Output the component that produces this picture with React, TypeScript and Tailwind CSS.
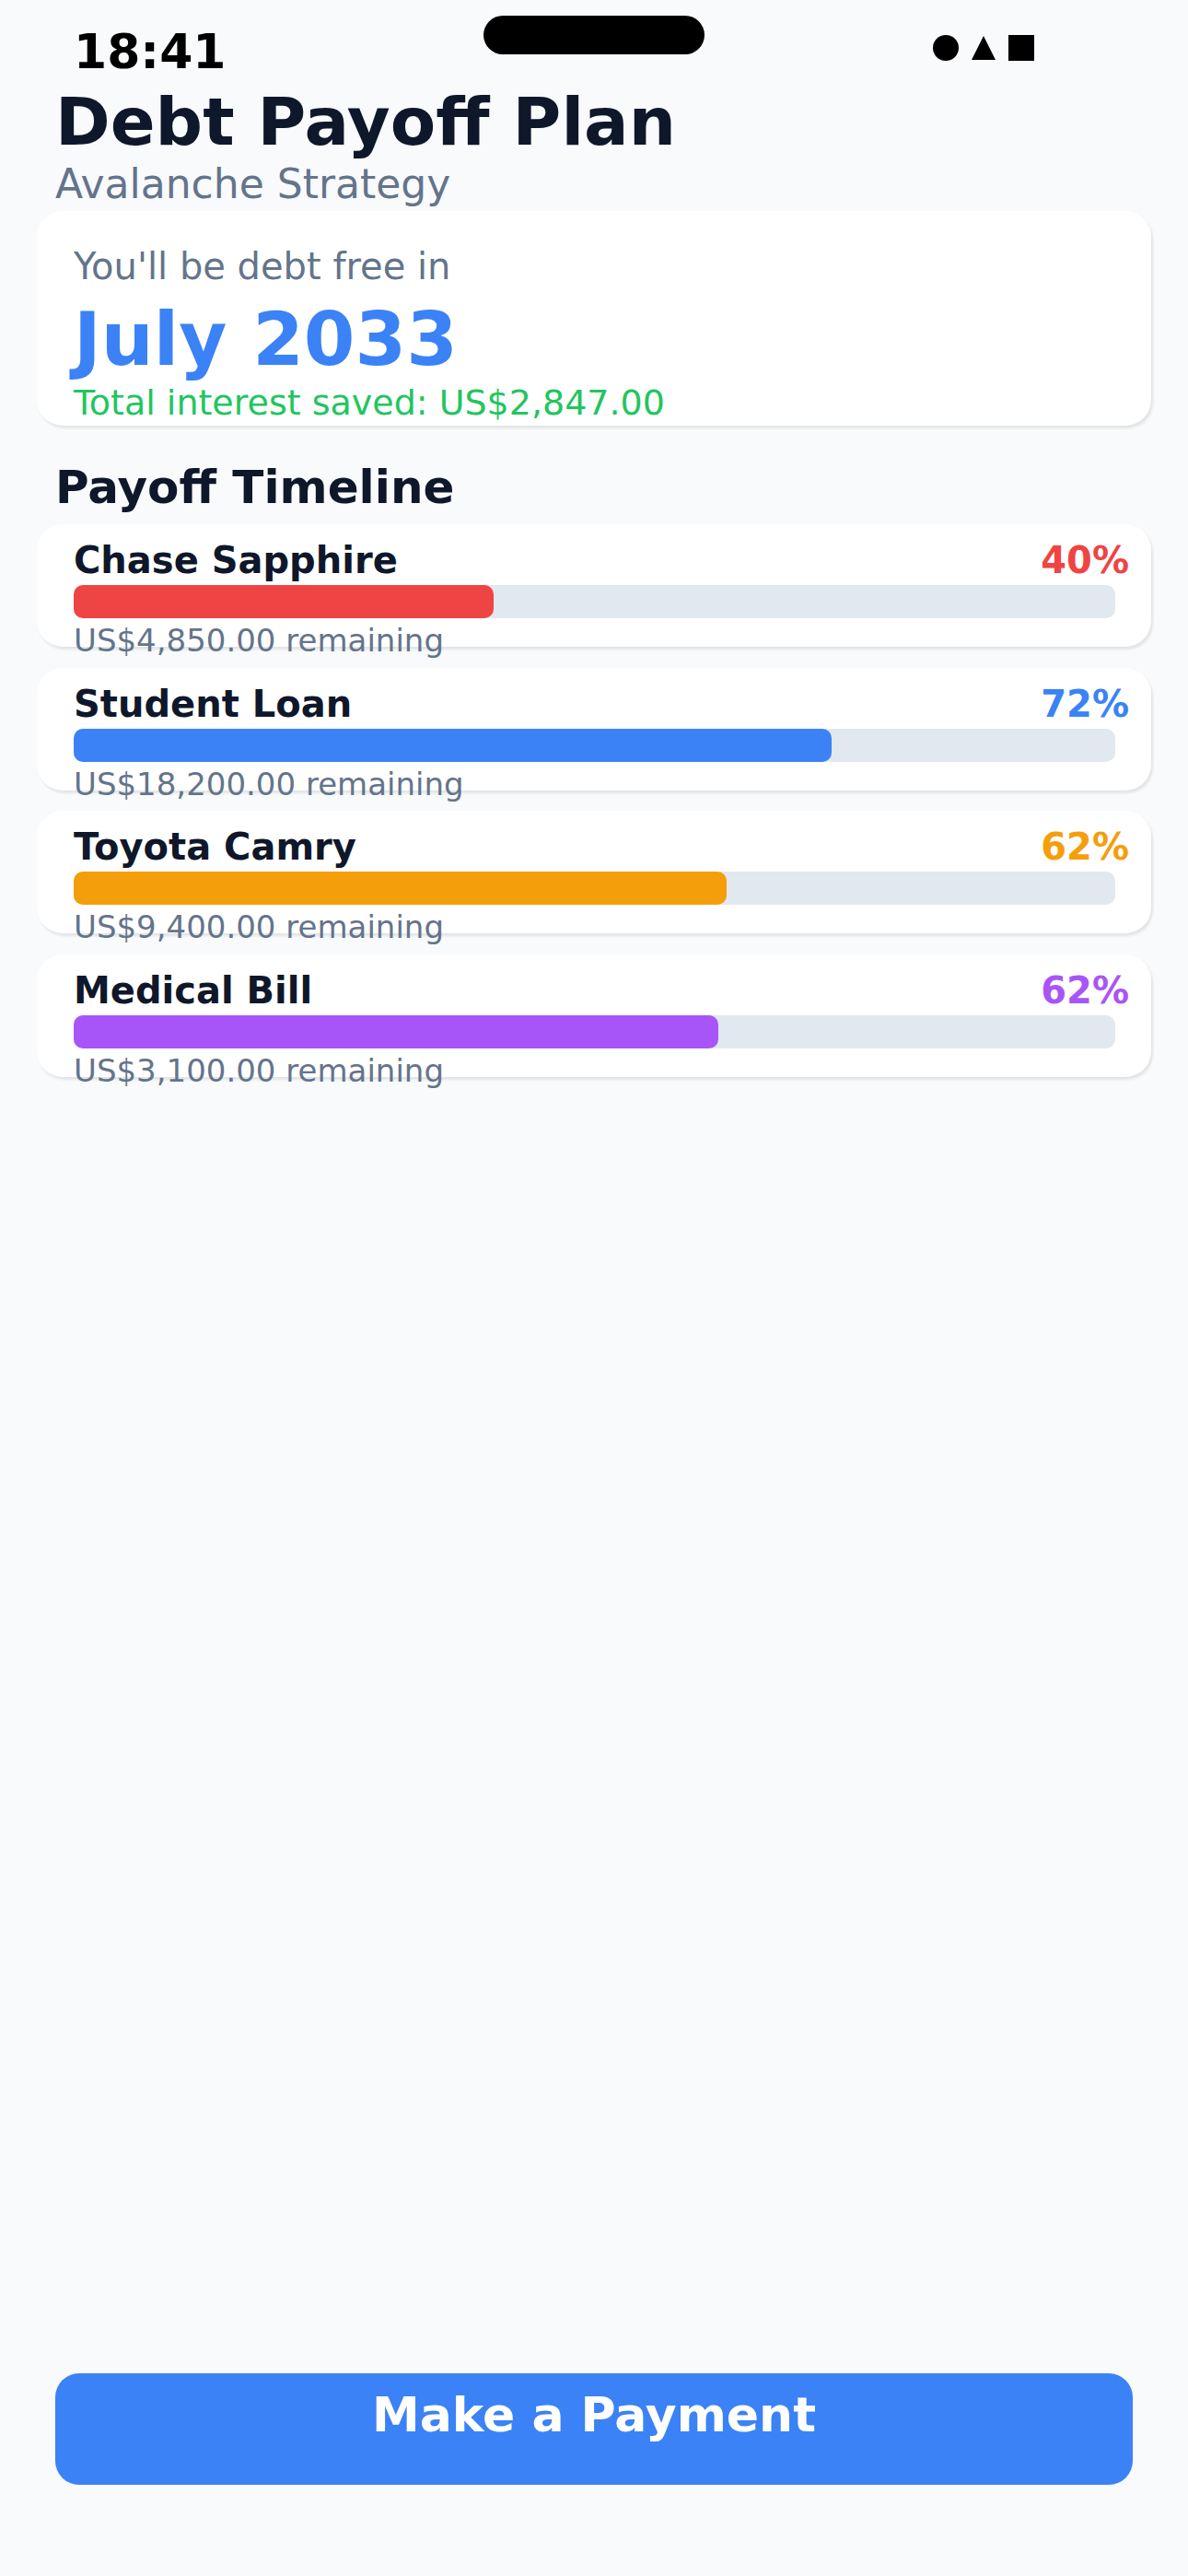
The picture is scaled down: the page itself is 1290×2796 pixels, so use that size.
import React from "react";

type Debt = {
  name: string;
  pct: number;
  fill: number;
  remaining: string;
  text: string;
  bar: string;
};

const debts: Debt[] = [
  { name: "Chase Sapphire", pct: 40, fill: 40.3, remaining: "US$4,850.00", text: "text-[#ef4444]", bar: "bg-[#ef4444]" },
  { name: "Student Loan", pct: 72, fill: 72.8, remaining: "US$18,200.00", text: "text-[#3b82f6]", bar: "bg-[#3b82f6]" },
  { name: "Toyota Camry", pct: 62, fill: 62.7, remaining: "US$9,400.00", text: "text-[#f59e0b]", bar: "bg-[#f59e0b]" },
  { name: "Medical Bill", pct: 62, fill: 61.9, remaining: "US$3,100.00", text: "text-[#a855f7]", bar: "bg-[#a855f7]" },
];

const StatusBar = () => {
  return (
    <div className="grid grid-cols-[1fr_auto_1fr] items-start pt-[17px]">
      <div className="pl-[80px] mt-[9px] text-[52px] leading-[60px] font-bold text-black">18:41</div>
      <div className="w-[240px] h-[42px] rounded-full bg-black" />
      <div className="flex justify-end items-center gap-[13px] pr-[167px] mt-[21px]">
        <div className="w-[28px] h-[28px] rounded-full bg-black" />
        <svg width="28" height="28" viewBox="0 0 28 28">
          <polygon points="14,1 27,27 1,27" fill="black" />
        </svg>
        <div className="w-[28px] h-[28px] bg-black" />
      </div>
    </div>
  );
};

const DebtCard = ({ debt }: { debt: Debt }) => {
  return (
    <div className="h-[133px] bg-white rounded-[28px] pl-[40px] pr-[24px] pt-[16px] shadow-[2px_3px_3px_rgba(0,0,0,0.09)]">
      <div className="flex justify-between items-baseline">
        <span className="text-[40px] leading-[47px] font-bold text-[#0f172a]">{debt.name}</span>
        <span className={`text-[40px] leading-[47px] font-bold ${debt.text}`}>{debt.pct}%</span>
      </div>
      <div className="mt-[3px] mr-[15px] h-[36px] rounded-[10px] bg-[#e2e8f0]">
        <div className={`h-full rounded-[10px] ${debt.bar}`} style={{ width: `${debt.fill}%` }} />
      </div>
      <div className="mt-[4px] text-[34px] leading-[40px] text-[#64748b] whitespace-nowrap">
        {debt.remaining} remaining
      </div>
    </div>
  );
};

export default function App() {
  return (
    <div
      className="min-h-[2796px] w-[1290px] bg-[#f8fafc] flex flex-col"
      style={{ fontFamily: '"DejaVu Sans", "Noto Sans", sans-serif' }}
    >
      <StatusBar />

      <div className="px-[60px] mt-[4px]">
        <h1 className="text-[72px] leading-[84px] font-bold text-[#0f172a]">Debt Payoff Plan</h1>
        <p className="text-[44px] leading-[51px] text-[#64748b]">Avalanche Strategy</p>
      </div>

      <div className="mx-[40px] mt-[4px] h-[233px] bg-white rounded-[28px] px-[40px] pt-[37px] shadow-[2px_3px_3px_rgba(0,0,0,0.09)]">
        <p className="text-[40px] leading-[47px] text-[#64748b]">You'll be debt free in</p>
        <p className="mt-[9px] text-[80px] leading-[93px] font-bold text-[#3b82f6]">July 2033</p>
        <p className="text-[38px] leading-[44px] text-[#22c55e] whitespace-nowrap">Total interest saved: US$2,847.00</p>
      </div>

      <h2 className="px-[60px] mt-[38px] text-[50px] leading-[58px] font-bold text-[#0f172a]">Payoff Timeline</h2>

      <div className="mx-[40px] mt-[11px] flex flex-col gap-[22.67px]">
        {debts.map((d) => (
          <DebtCard key={d.name} debt={d} />
        ))}
      </div>

      <button className="mt-auto mb-[99px] mx-[60px] h-[121px] rounded-[26px] bg-[#3b82f6] pt-[15px] flex justify-center items-start">
        <span className="text-[52px] leading-[60px] font-bold text-white">Make a Payment</span>
      </button>
    </div>
  );
}
